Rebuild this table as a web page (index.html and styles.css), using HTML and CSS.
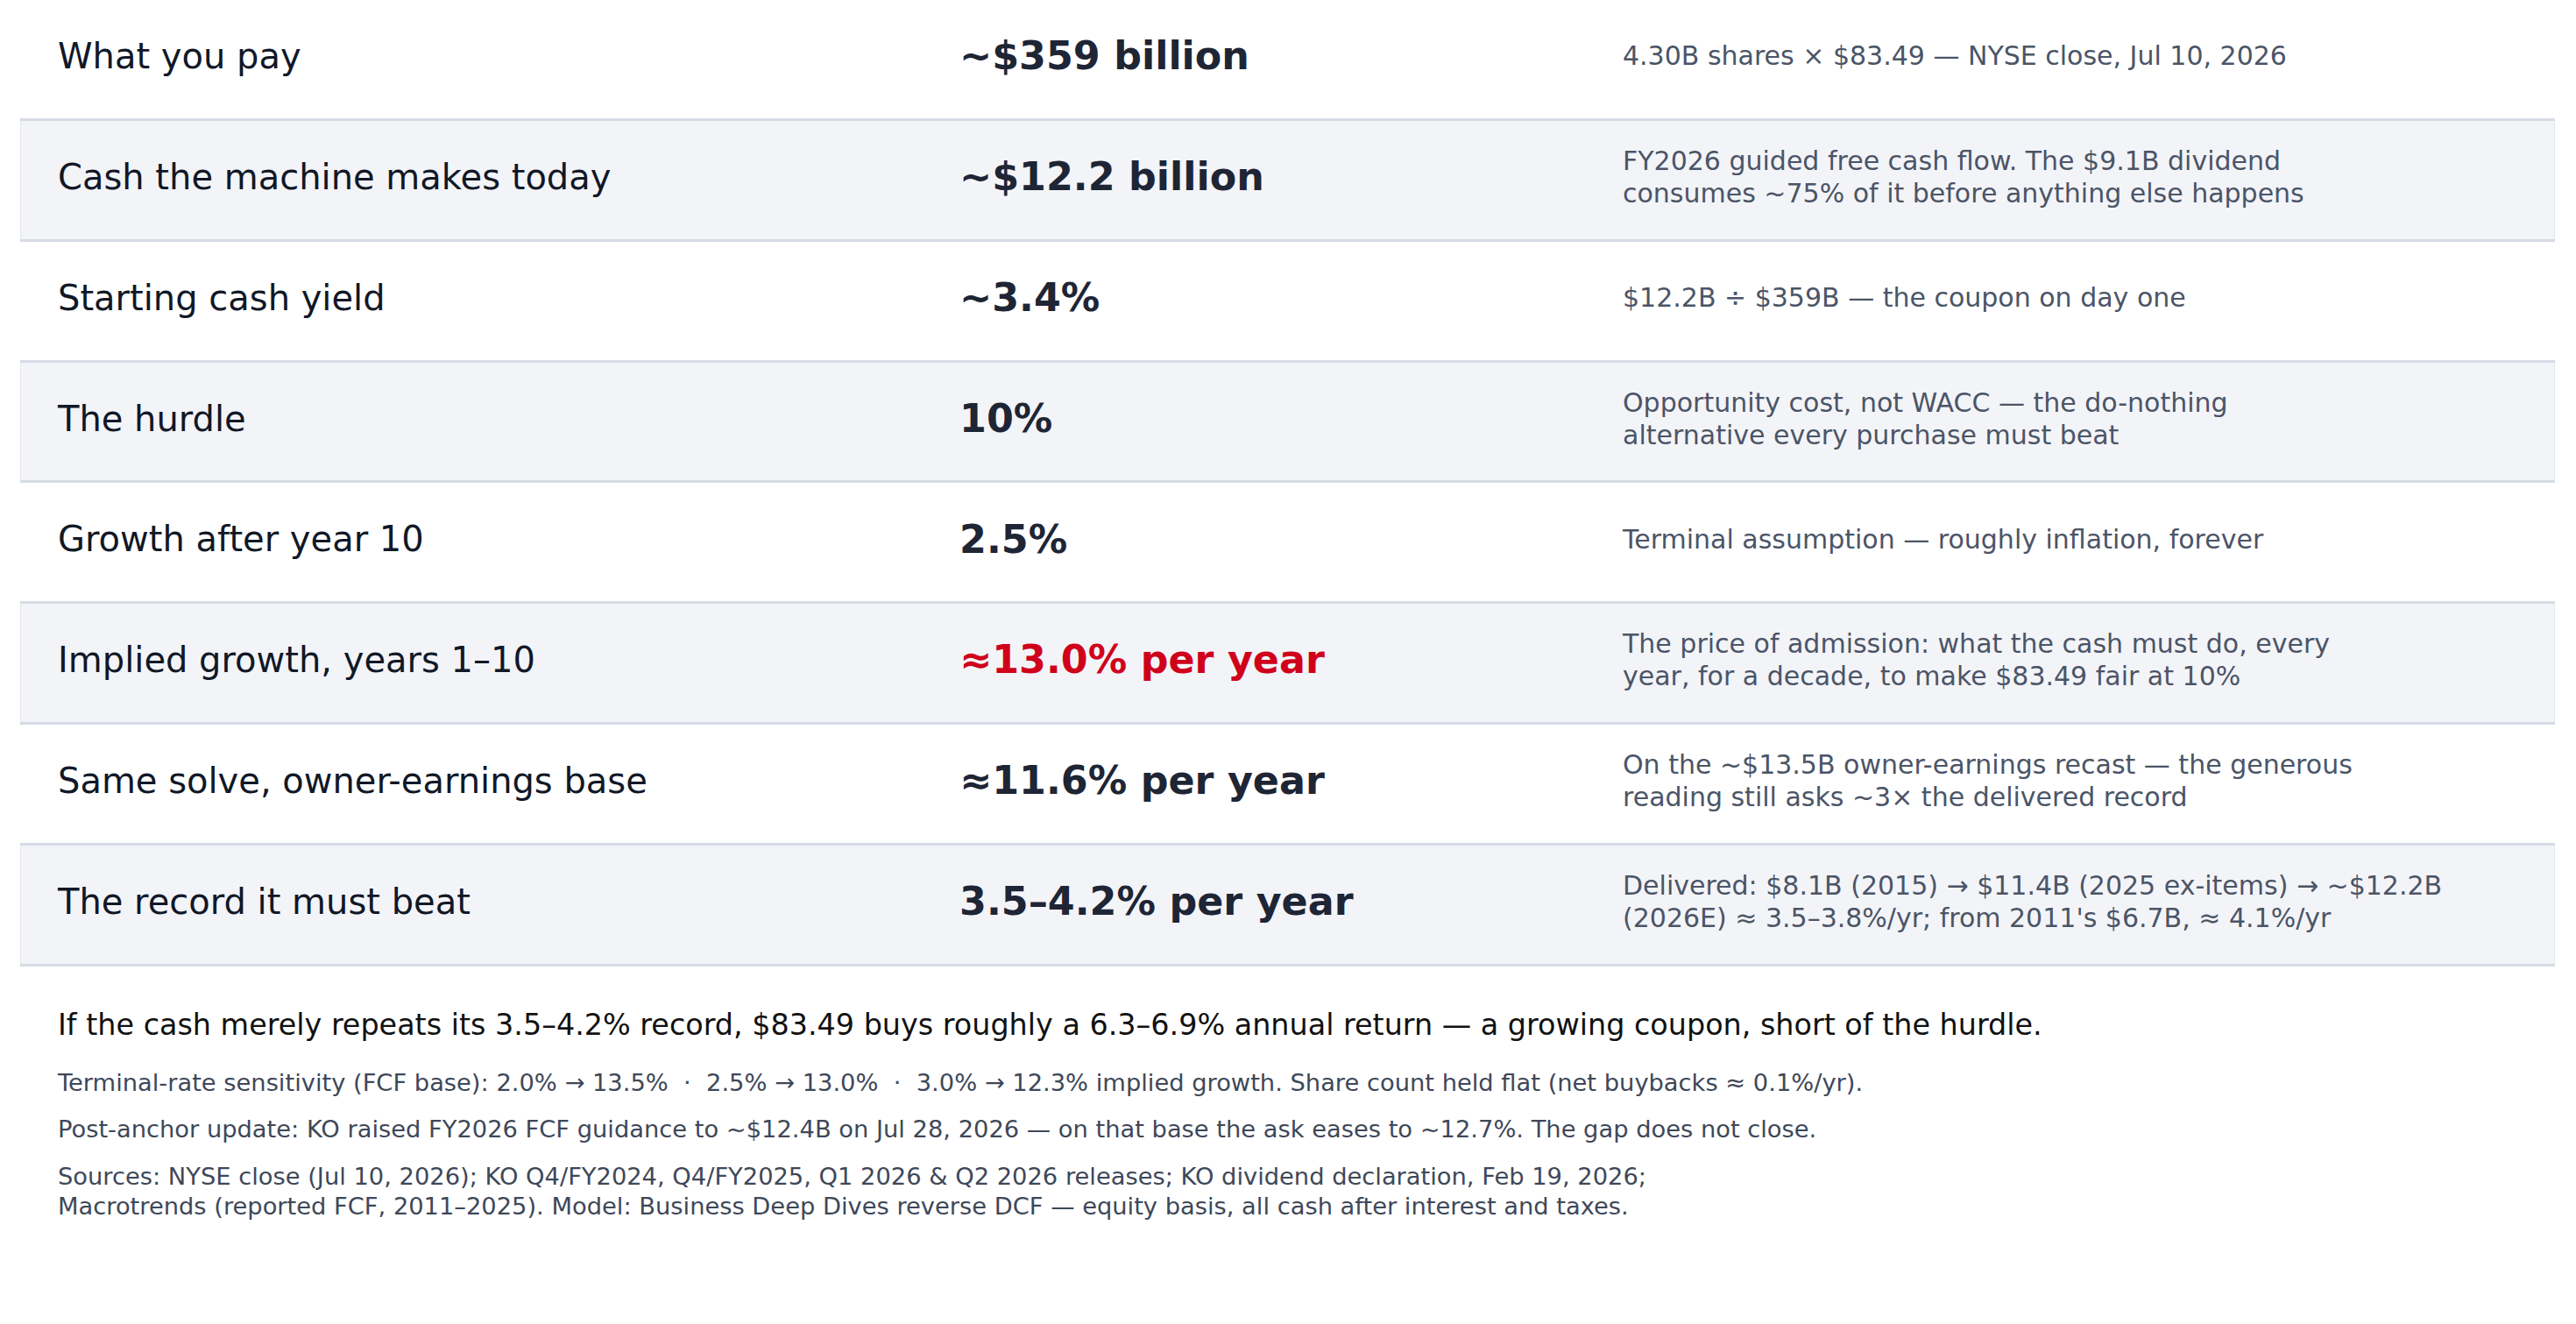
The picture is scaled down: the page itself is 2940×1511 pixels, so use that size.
FILE: index.html
```html
<!DOCTYPE html>
<html lang="en">
<head>
<meta charset="utf-8">
<title>Reverse DCF — what the price asks</title>
<link rel="stylesheet" href="styles.css">
</head>
<body>
<main class="page">
  <section class="table">
    <div class="row">
      <div class="label">What you pay</div>
      <div class="value">~$359 billion</div>
      <div class="note">4.30B shares × $83.49 — NYSE close, Jul 10, 2026</div>
    </div>
    <div class="row alt">
      <div class="label">Cash the machine makes today</div>
      <div class="value">~$12.2 billion</div>
      <div class="note">FY2026 guided free cash flow. The $9.1B dividend<br>consumes ~75% of it before anything else happens</div>
    </div>
    <div class="row">
      <div class="label">Starting cash yield</div>
      <div class="value">~3.4%</div>
      <div class="note">$12.2B ÷ $359B — the coupon on day one</div>
    </div>
    <div class="row alt">
      <div class="label">The hurdle</div>
      <div class="value">10%</div>
      <div class="note">Opportunity cost, not WACC — the do-nothing<br>alternative every purchase must beat</div>
    </div>
    <div class="row">
      <div class="label">Growth after year 10</div>
      <div class="value">2.5%</div>
      <div class="note">Terminal assumption — roughly inflation, forever</div>
    </div>
    <div class="row alt">
      <div class="label">Implied growth, years 1–10</div>
      <div class="value accent">≈13.0% per year</div>
      <div class="note">The price of admission: what the cash must do, every<br>year, for a decade, to make $83.49 fair at 10%</div>
    </div>
    <div class="row">
      <div class="label">Same solve, owner-earnings base</div>
      <div class="value">≈11.6% per year</div>
      <div class="note">On the ~$13.5B owner-earnings recast — the generous<br>reading still asks ~3× the delivered record</div>
    </div>
    <div class="row alt">
      <div class="label">The record it must beat</div>
      <div class="value">3.5–4.2% per year</div>
      <div class="note">Delivered: $8.1B (2015) → $11.4B (2025 ex-items) → ~$12.2B<br>(2026E) ≈ 3.5–3.8%/yr; from 2011's $6.7B, ≈ 4.1%/yr</div>
    </div>
  </section>

  <section class="footer">
    <p class="summary">If the cash merely repeats its 3.5–4.2% record, $83.49 buys roughly a 6.3–6.9% annual return — a growing coupon, short of the hurdle.</p>
    <p class="small">Terminal-rate sensitivity (FCF base): 2.0% → 13.5%&nbsp; · &nbsp;2.5% → 13.0%&nbsp; · &nbsp;3.0% → 12.3% implied growth. Share count held flat (net buybacks ≈ 0.1%/yr).</p>
    <p class="small">Post-anchor update: KO raised FY2026 FCF guidance to ~$12.4B on Jul 28, 2026 — on that base the ask eases to ~12.7%. The gap does not close.</p>
    <p class="small">Sources: NYSE close (Jul 10, 2026); KO Q4/FY2024, Q4/FY2025, Q1 2026 &amp; Q2 2026 releases; KO dividend declaration, Feb 19, 2026;<br>Macrotrends (reported FCF, 2011–2025). Model: Business Deep Dives reverse DCF — equity basis, all cash after interest and taxes.</p>
  </section>
</main>
</body>
</html>
```

FILE: styles.css
```css
html, body {
  margin: 0;
  padding: 0;
  background: #ffffff;
}

body {
  font-family: "DejaVu Sans", "Liberation Sans", sans-serif;
  color: #111827;
}

.page {
  padding: 0 24px 0 23px;
}

.table {
  display: flex;
  flex-direction: column;
}

.row {
  display: grid;
  grid-template-columns: 1029px 756px 1fr;
  align-items: center;
  height: 137.86px;
  box-sizing: border-box;
  border-bottom: 3px solid #d6dbe5;
  padding-bottom: 7px;
}

.row.alt {
  background: #f3f4f8;
  box-shadow: inset 1px 0 0 #e4e7ee, inset -1px 0 0 #e4e7ee;
}

.label {
  padding-left: 43px;
  font-size: 40px;
  line-height: 1.3;
  color: #111827;
}

.value {
  padding-left: 43px;
  font-size: 44.4px;
  line-height: 1.3;
  font-weight: bold;
  color: #1e2535;
}

.value.accent {
  color: #d0021b;
}

.note {
  padding-left: 44px;
  font-size: 30px;
  line-height: 37px;
  color: #4b5567;
}

.footer {
  padding: 45px 0 0 43px;
}

.footer p {
  margin: 0;
}

.summary {
  font-size: 33.4px;
  line-height: 1.3;
  color: #111111;
  margin-bottom: 27.5px !important;
}

.small {
  font-size: 27.3px;
  line-height: 34px;
  color: #3e4859;
  margin-top: 19.5px !important;
}

.summary + .small {
  margin-top: 0 !important;
}
```
